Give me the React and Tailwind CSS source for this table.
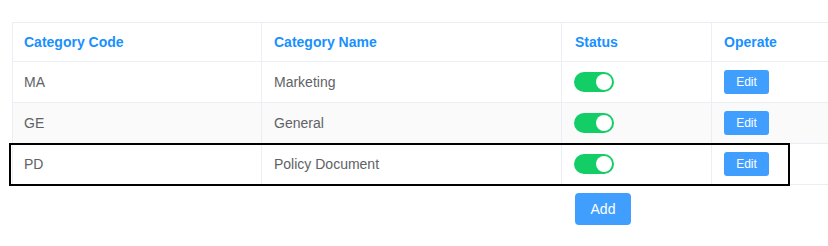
import React from "react";

const rows = [
   { code: "MA", name: "Marketing", striped: false },
   { code: "GE", name: "General", striped: true },
   { code: "PD", name: "Policy Document", striped: false },
];

const cols = "grid grid-cols-[249px_300px_150px_1fr]";

function Toggle() {
   return (
      <div className="w-[40px] h-[20px] rounded-full bg-[#13ce66] flex items-center justify-end px-[2px]">
         <div className="w-[16px] h-[16px] rounded-full bg-white" />
      </div>
   );
}

export default function App() {
   return (
      <div className="relative w-[828px] h-[246px] bg-white overflow-hidden pl-[12px] pt-[22px] font-['Liberation_Sans',Arial,sans-serif] text-[14px]">
         <div className="border-l border-t border-[#ebeef5]">
            {/* header */}
            <div className={`${cols} h-[39px] font-bold text-[#1890ff]`}>
               <div className="border-r border-b border-[#ebeef5] flex items-center pl-[11px]">Category Code</div>
               <div className="border-r border-b border-[#ebeef5] flex items-center pl-[12px]">Category Name</div>
               <div className="border-r border-b border-[#ebeef5] flex items-center pl-[13px]">Status</div>
               <div className="border-b border-[#ebeef5] flex items-center pl-[12px]">Operate</div>
            </div>

            {rows.map((row) => (
               <div
                  key={row.code}
                  className={`${cols} h-[41px] text-[#606266] ${row.striped ? "bg-[#fafafa]" : "bg-white"}`}
               >
                  <div className="border-r border-b border-[#ebeef5] flex items-center pl-[11px]">{row.code}</div>
                  <div className="border-r border-b border-[#ebeef5] flex items-center pl-[12px]">{row.name}</div>
                  <div className="border-r border-b border-[#ebeef5] flex items-center pl-[12px]">
                     <Toggle />
                  </div>
                  <div className="border-b border-[#ebeef5] flex items-center pl-[12px]">
                     <button className="w-[45px] h-[24px] rounded-[3px] bg-[#409eff] text-white text-[12px] leading-none">
                        Edit
                     </button>
                  </div>
               </div>
            ))}
         </div>

         <div className={`${cols} mt-[8px]`}>
            <div />
            <div />
            <div className="pl-[14px]">
               <button className="w-[56px] h-[32px] rounded-[4px] bg-[#409eff] text-white text-[14px] leading-none">
                  Add
               </button>
            </div>
         </div>

         {/* highlight box drawn over the last row */}
         <div className="absolute left-[9px] top-[143px] w-[781px] h-[43px] border-2 border-black pointer-events-none" />
      </div>
   );
}
